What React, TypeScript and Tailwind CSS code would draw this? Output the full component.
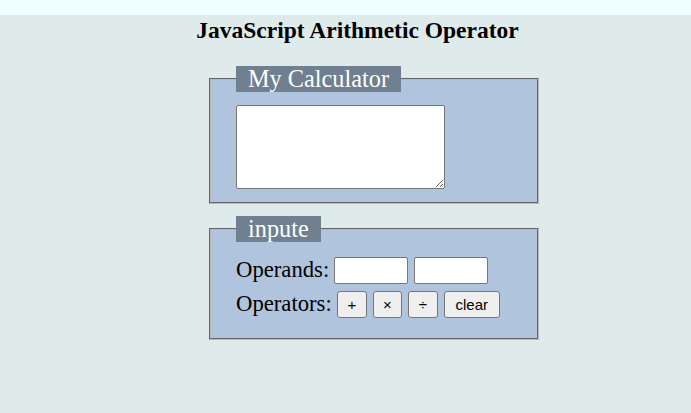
import React, { useState } from "react";

const App = () => {
  const [display, setDisplay] = useState("");
  const [a, setA] = useState("");
  const [b, setB] = useState("");

  // run one arithmetic operation on the two operands
  const calc = (op: string) => {
    const x = parseFloat(a);
    const y = parseFloat(b);
    let r = 0;
    if (op === "+") r = x + y;
    if (op === "×") r = x * y;
    if (op === "÷") r = x / y;
    setDisplay(`${a} ${op} ${b} = ${r}`);
  };

  const btn =
    "h-[27px] bg-[#efefef] border border-[#767676] rounded-[3px] text-[15px] leading-none text-black font-['Liberation_Sans',Arial,sans-serif]";
  const input =
    "w-[74px] h-[27px] bg-white border border-[#767676] rounded-[2px] px-1 text-[15px]";

  return (
    <div className="min-h-screen flex flex-col bg-[#dfebeb] font-['Liberation_Serif','Times_New_Roman',serif] text-black">
      <div className="h-[15px] bg-[#f0ffff]" />
      <h1 className="pl-[24px] text-center text-[23.5px] font-bold leading-[27px] mt-[2px]">
        JavaScript Arithmetic Operator
      </h1>

      <fieldset className="ml-[209px] mt-[22px] w-[330px] border-2 [border-style:groove] border-[#b8b8b8] bg-[#b0c4de] px-[25px] pt-[13px] pb-[13px]">
        <legend className="bg-[#708090] text-white text-[24.3px] leading-[26px] px-[12px]">
          My Calculator
        </legend>
        <textarea
          className="block w-[209px] h-[84px] bg-white border border-[#767676] rounded-[2px] p-1 text-[15px] resize"
          value={display}
          onChange={(e) => setDisplay(e.target.value)}
        />
      </fieldset>

      <fieldset className="ml-[209px] mt-[12px] w-[330px] border-2 [border-style:groove] border-[#b8b8b8] bg-[#b0c4de] px-[25px] pt-[14px] pb-[19px]">
        <legend className="bg-[#708090] text-white text-[24.3px] leading-[26px] px-[12px]">
          inpute
        </legend>
        <div className="flex items-center h-[29px] text-[22.7px]">
          <span>Operands:</span>
          <input className={`${input} ml-[5px]`} value={a} onChange={(e) => setA(e.target.value)} />
          <input className={`${input} ml-[6px]`} value={b} onChange={(e) => setB(e.target.value)} />
        </div>
        <div className="flex items-center h-[29px] mt-[5px] text-[22.7px]">
          <span>Operators:</span>
          <div className="flex gap-[6px] ml-[5px]">
            <button className={`${btn} w-[30px]`} onClick={() => calc("+")}>+</button>
            <button className={`${btn} w-[29px]`} onClick={() => calc("×")}>×</button>
            <button className={`${btn} w-[30px]`} onClick={() => calc("÷")}>÷</button>
            <button
              className={`${btn} w-[56px]`}
              onClick={() => {
                setDisplay("");
                setA("");
                setB("");
              }}
            >
              clear
            </button>
          </div>
        </div>
      </fieldset>
    </div>
  );
};

export default App;
